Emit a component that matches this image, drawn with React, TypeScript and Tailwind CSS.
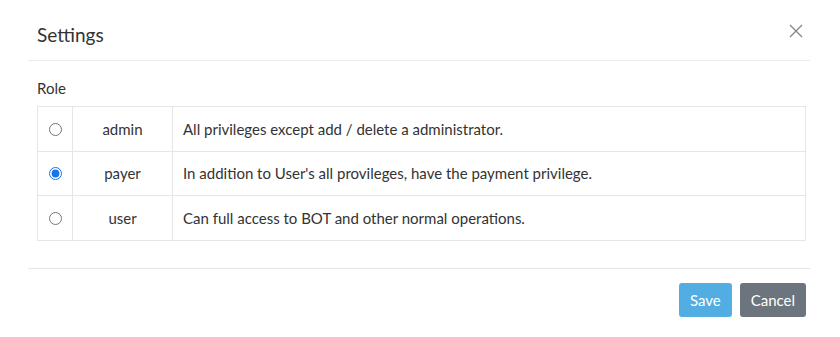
import React, { useState } from "react";

const rows = [
  { key: "admin", desc: "All privileges except add / delete a administrator." },
  { key: "payer", desc: "In addition to User's all provileges, have the payment privilege." },
  { key: "user", desc: "Can full access to BOT and other normal operations." },
];

export default function App() {
  const [role, setRole] = useState("payer");
  return (
    <div className="w-[840px] h-[337px] bg-white text-[#333] font-['Lato','Open_Sans',sans-serif]">
      <div className="ml-[28px] w-[782px]">
        <div className="flex items-center justify-between h-[61px] pl-[9px] pr-[6px] border-b border-[#e9ecef]">
          <h1 className="text-[19px] leading-none pt-[8px] text-[#333]">Settings</h1>
          <button className="text-[#888] pt-[2px]">
            <svg width="16" height="16" viewBox="0 0 16 16" stroke="currentColor" strokeWidth="1.4" fill="none">
              <path d="M2 2 L14 14 M14 2 L2 14" />
            </svg>
          </button>
        </div>
        <div className="pl-[9px] pr-[4px] pt-[18px] pb-[27px] border-b border-[#e3e6ea]">
          <div className="text-[15px] leading-[18px] mb-[9px]">Role</div>
          <table className="w-full border-collapse text-[15px]">
            <tbody>
              {rows.map((r) => (
                <tr key={r.key} className="h-[44.7px]">
                  <td className="border border-[#e3e6ea] w-[35px] text-center align-middle">
                    <input
                      type="radio"
                      name="role"
                      checked={role === r.key}
                      onChange={() => setRole(r.key)}
                      className="w-[13px] h-[13px] align-middle mb-[3px] accent-[#1a73e8]"
                    />
                  </td>
                  <td className="border border-[#e3e6ea] w-[100px] text-center align-middle">{r.key}</td>
                  <td className="border border-[#e3e6ea] px-[10px] align-middle">{r.desc}</td>
                </tr>
              ))}
            </tbody>
          </table>
        </div>
        <div className="flex justify-end gap-[8px] pt-[14px] pr-[4px]">
          <button className="h-[34px] px-[11px] rounded-[3px] bg-[#52ade3] text-white text-[15px]">Save</button>
          <button className="h-[34px] px-[11px] rounded-[3px] bg-[#6c757d] text-white text-[15px]">Cancel</button>
        </div>
      </div>
    </div>
  );
}
